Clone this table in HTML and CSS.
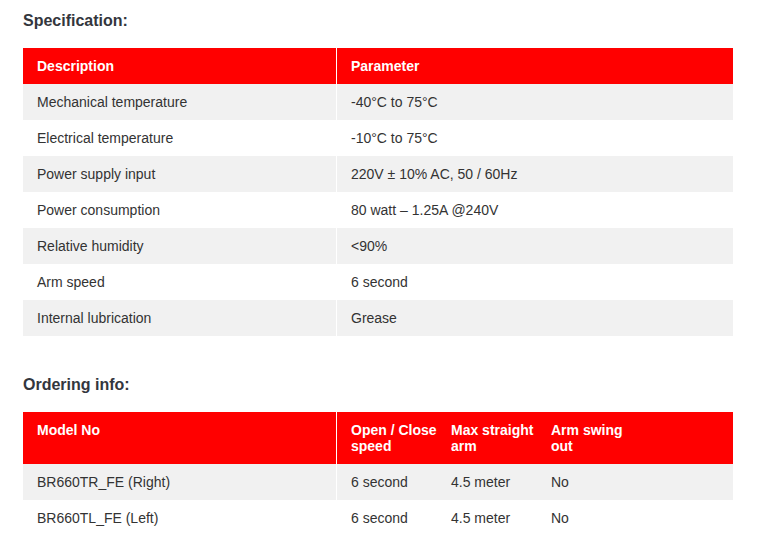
FILE: index.html
```html
<!DOCTYPE html>
<html>
<head>
<meta charset="utf-8">
<link rel="stylesheet" href="styles.css">
</head>
<body>
<div class="page">
  <h2 class="title">Specification:</h2>
  <table class="tbl">
    <colgroup><col class="c1"><col></colgroup>
    <thead>
      <tr><th>Description</th><th class="div">Parameter</th></tr>
    </thead>
    <tbody>
      <tr><td>Mechanical temperature</td><td class="div">-40°C to 75°C</td></tr>
      <tr><td>Electrical temperature</td><td class="div">-10°C to 75°C</td></tr>
      <tr><td>Power supply input</td><td class="div">220V ± 10% AC, 50 / 60Hz</td></tr>
      <tr><td>Power consumption</td><td class="div">80 watt – 1.25A @240V</td></tr>
      <tr><td>Relative humidity</td><td class="div">&lt;90%</td></tr>
      <tr><td>Arm speed</td><td class="div">6 second</td></tr>
      <tr><td>Internal lubrication</td><td class="div">Grease</td></tr>
    </tbody>
  </table>

  <h2 class="title second">Ordering info:</h2>
  <table class="tbl">
    <colgroup><col class="c1"><col class="c2"><col class="c3"><col class="c3"><col></colgroup>
    <thead>
      <tr><th>Model No</th><th class="div narrow">Open / Close speed</th><th class="narrow">Max straight arm</th><th class="narrow">Arm swing out</th><th></th></tr>
    </thead>
    <tbody>
      <tr><td>BR660TR_FE (Right)</td><td class="div">6 second</td><td>4.5 meter</td><td>No</td><td></td></tr>
      <tr><td>BR660TL_FE (Left)</td><td class="div">6 second</td><td>4.5 meter</td><td>No</td><td></td></tr>
    </tbody>
  </table>
</div>
</body>
</html>
```

FILE: styles.css
```css
html, body {
  margin: 0;
  padding: 0;
  background: #fff;
}
body {
  font-family: "Liberation Sans", Arial, Helvetica, sans-serif;
  color: #333;
  font-size: 14px;
  line-height: 16px;
}
.page {
  padding: 0 0 0 23px;
  width: 710px;
}
.title {
  font-size: 16px;
  line-height: 20px;
  font-weight: bold;
  color: #33363d;
  margin: 11px 0 17px 0;
}
.title.second {
  margin-top: 39px;
}
.tbl {
  width: 710px;
  border-collapse: separate;
  border-spacing: 0;
  table-layout: fixed;
}
.c1 { width: 313px; }
.c2 { width: 101px; }
.c3 { width: 100px; }
.tbl th,
.tbl td {
  padding: 10px 14px;
  text-align: left;
  vertical-align: top;
  line-height: 16px;
}
.tbl th {
  background: #ff0000;
  color: #fff;
  font-weight: bold;
}
.tbl th.narrow {
  padding-right: 0;
}
.tbl .div {
  border-left: 1px solid #fff;
}
.tbl tbody tr:nth-child(odd) td {
  background: #f1f1f1;
}
.tbl tbody tr:nth-child(even) td {
  background: #fff;
}
```
